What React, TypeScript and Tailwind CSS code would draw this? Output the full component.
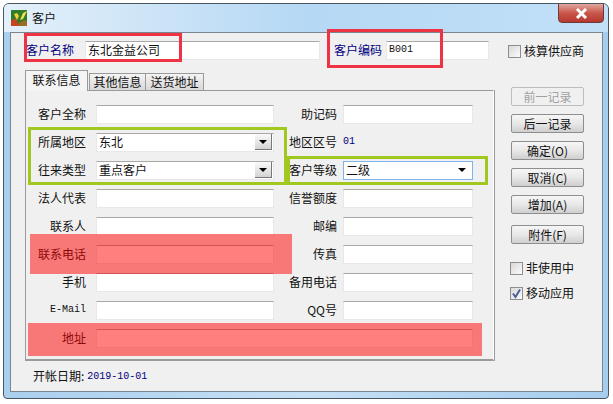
import React from 'react';

const CJK = "font-['Noto_Sans_CJK_SC','Liberation_Sans',sans-serif]";

// left and right columns of the contact tab
const ROWS: [string, string][] = [
  ['客户全称', '助记码'],
  ['所属地区', '地区区号'],
  ['往来类型', '客户等级'],
  ['法人代表', '信誉额度'],
  ['联系人', '邮编'],
  ['联系电话', '传真'],
  ['手机', '备用电话'],
  ['E-Mail', 'QQ号'],
];

function Input({ value, className = '' }: { value?: string; className?: string }) {
  return (
    <div className={`h-[19px] bg-white border-t border-t-[#a8a8a8] border-x border-x-[#e8e8e8] border-b border-b-[#e8e8e8] pl-[2px] text-[12px] leading-[15px] text-[#111] ${className}`}>
      {value}
    </div>
  );
}

function Combo({ value }: { value: string }) {
  return (
    <div className="flex h-[19px] w-[178px] items-start justify-between border-t border-t-[#a8a8a8] border-x border-x-[#e8e8e8] border-b border-b-[#e8e8e8] bg-white pl-[2px] pr-[1px] text-[12px] leading-[15px] text-[#111]">
      <span>{value}</span>
      <span className="flex h-[16px] w-[17px] items-center justify-center border-r border-b border-r-[#777] border-b-[#777] bg-gradient-to-b from-[#fafafa] to-[#d4d4d4]">
        <span className="h-0 w-0 border-x-[4px] border-t-[4px] border-x-transparent border-t-black" />
      </span>
    </div>
  );
}

function Label({ text, width, className = '' }: { text: string; width: string; className?: string }) {
  return <span className={`${width} shrink-0 text-right text-[12px] leading-[17px] text-[#111] ${className}`}>{text}</span>;
}

function Btn({ text, disabled, className = '' }: { text: string; disabled?: boolean; className?: string }) {
  return (
    <button
      className={`flex h-[19px] w-[73px] items-center justify-center rounded-[2px] border bg-gradient-to-b text-[12px] leading-none ${disabled ? 'border-[#bdbdbd] from-[#f0f0f0] to-[#f0f0f0] text-[#a0a0a0]' : 'border-[#8e8e8e] from-[#f6f6f6] via-[#e8e8e8] to-[#cfcfcf] text-[#111]'} ${className}`}
    >
      {text}
    </button>
  );
}

function Check({ text, checked, className = '' }: { text: string; checked?: boolean; className?: string }) {
  return (
    <div className={`flex items-center gap-[3px] text-[12px] text-[#111] ${className}`}>
      <span className="flex h-[13px] w-[13px] items-center justify-center border border-[#8e8e8e] bg-gradient-to-br from-[#d8d8d8] to-[#fbfbfb]">
        {checked && (
          <svg width="11" height="11" viewBox="0 0 11 11">
            <path d="M2 5.5 L4.5 9 L9 1.5" fill="none" stroke="#4a5f97" strokeWidth="2" />
          </svg>
        )}
      </span>
      {text}
    </div>
  );
}

export default function App() {
  return (
    <div className={`relative h-[404px] w-[613px] overflow-hidden bg-white ${CJK}`}>
      {/* window frame */}
      <div className="ml-[3px] mt-[3px] flex h-[396px] w-[606px] flex-col overflow-hidden rounded-t-[6px] rounded-b-[4px] border border-[#4a5560] bg-gradient-to-r from-[#a9cfee] via-[#c5e0f6] to-[#a5cdee] pb-[6px] pl-[6px] pr-[5px]">
        {/* title bar */}
        <div className="relative -mx-[6px] flex h-[28px] shrink-0 items-center gap-[5px] bg-gradient-to-r from-[#e4f0fa] via-[#b5d8f4] to-[#c2e0f8] pl-[7px] text-[12px] text-[#111]">
          <svg width="16" height="16" viewBox="0 0 16 16" className="mb-[1px]">
            <rect width="16" height="16" fill="#2f7d2a" />
            <path d="M0 11 L5 8 L8 16 L0 16 Z" fill="#c9461c" />
            <path d="M3 4 L6 10 L8 6 L6 3 Z" fill="#f2d235" />
            <path d="M9 10 L12 3 L16 1 L12 9 Z" fill="#f4e04d" />
            <path d="M8 13 L13 10 L16 11 L16 16 L8 16 Z" fill="#9c6b24" />
          </svg>
          <span>客户</span>
          {/* close button */}
          <div className="absolute right-[5px] top-[-1px] flex h-[20px] w-[46px] items-center justify-center rounded-b-[4px] border border-[#6d3a38] bg-gradient-to-b from-[#e0a8a0] via-[#c9564c] to-[#b5382f]">
            <svg width="13" height="11" viewBox="0 0 13 11">
              <path d="M2 1 L11 10 M11 1 L2 10" stroke="#fff" strokeWidth="3" />
            </svg>
          </div>
        </div>

        {/* client area */}
        <div className="flex min-h-0 flex-1 flex-col border border-[#7b8590] bg-[#f0f0f0] pl-[14px]">
          {/* header row */}
          <div className="mt-[8px] flex h-[19px] shrink-0 items-start">
            <span className="ml-[1px] w-[59px] text-[12px] leading-[17px] text-[#000080]">客户名称</span>
            <Input value="东北金益公司" className="w-[235px]" />
            <span className="ml-[14px] w-[52px] text-[12px] leading-[17px] text-[#000080]">客户编码</span>
            <Input value="B001" className="w-[103px] font-['Liberation_Mono',monospace] !text-[10px]" />
            <Check text="核算供应商" className="ml-[19px] mt-[1px]" />
          </div>

          <div className="mt-[10px] flex">
            {/* tabs and panel */}
            <div className="w-[469px] shrink-0">
              <div className="flex h-[20px] items-end text-[12px] leading-[14px] text-[#111]">
                <div className="relative z-10 mb-[-1px] flex h-[21px] w-[63px] items-center justify-center border border-b-0 border-[#9a9a9a] bg-[#f4f4f4] pb-[2px]">联系信息</div>
                <div className="ml-[1px] flex h-[17px] w-[57px] items-center justify-center border border-b-0 border-[#9a9a9a] bg-gradient-to-b from-[#f4f4f4] to-[#d8d8d8]">其他信息</div>
                <div className="flex h-[17px] w-[58px] items-center justify-center border border-b-0 border-l-0 border-[#9a9a9a] bg-gradient-to-b from-[#f4f4f4] to-[#d8d8d8]">送货地址</div>
              </div>
              <div className="flex h-[271px] flex-col gap-[9px] border-x border-x-[#fff] border-l-[#9a9a9a] border-t border-t-[#9a9a9a] border-b-2 border-b-[#9a9a9a] pr-[19px] pt-[14px] shadow-[1px_0_0_#9a9a9a]">
                {ROWS.map(([left, right], i) => (
                  <div key={left} className="flex h-[19px]">
                    <Label text={left} width="w-[60px]" className={left === 'E-Mail' ? "font-['Liberation_Mono',monospace] !text-[10px]" : ''} />
                    <div className="ml-[10px]">
                      {i === 1 ? <Combo value="东北" /> : i === 2 ? <Combo value="重点客户" /> : <Input className="w-[178px]" />}
                    </div>
                    <Label text={right} width="w-[63px]" />
                    <div className="ml-[6px]">
                      {i === 1 ? (
                        <div className="font-['Liberation_Mono',monospace] text-[10px] leading-[17px] text-[#000080]">01</div>
                      ) : i === 2 ? (
                        <div className="flex h-[19px] w-[130px] items-start justify-between border border-[#7eb4ea] bg-white pl-[2px] pr-[6px] text-[12px] leading-[15px] text-[#111]">
                          <span>二级</span>
                          <span className="mt-[6px] h-0 w-0 border-x-[4px] border-t-[4px] border-x-transparent border-t-black" />
                        </div>
                      ) : (
                        <Input className="w-[130px]" />
                      )}
                    </div>
                  </div>
                ))}
                <div className="flex h-[19px]">
                  <Label text="地址" width="w-[60px]" />
                  <Input className="ml-[10px] w-[377px]" />
                </div>
              </div>
              <div className="mt-[6px] flex items-center pl-[8px] text-[12px] text-[#111]">
                开帐日期:
                <span className="ml-[3px] font-['Liberation_Mono',monospace] text-[10px] text-[#000080]">2019-10-01</span>
              </div>
            </div>

            {/* buttons and checks */}
            <div className="ml-[17px] flex flex-col pt-[17px]">
              <Btn text="前一记录" disabled />
              <Btn text="后一记录" className="mt-[8px]" />
              <Btn text="确定(O)" className="mt-[8px]" />
              <Btn text="取消(C)" className="mt-[8px]" />
              <Btn text="增加(A)" className="mt-[8px]" />
              <Btn text="附件(F)" className="mt-[11px]" />
              <Check text="非使用中" className="-ml-[1px] mt-[15px]" />
              <Check text="移动应用" checked className="-ml-[1px] mt-[7px]" />
            </div>
          </div>
        </div>
      </div>

      {/* annotation boxes drawn on top of the screenshot */}
      <div className="absolute left-[24px] top-[33px] h-[29px] w-[158px] border-[3px] border-[#ee3344]" />
      <div className="absolute left-[327px] top-[29px] h-[39px] w-[116px] border-[3px] border-[#ee3344]" />
      <div className="absolute left-[28px] top-[127px] h-[58px] w-[259px] border-[3px] border-[#a0c81e]" />
      <div className="absolute left-[287px] top-[156px] h-[29px] w-[201px] border-[3px] border-[#a0c81e]" />
      <div className="absolute left-[30px] top-[234px] h-[40px] w-[262px] bg-[#ff0000]/50" />
      <div className="absolute left-[28px] top-[323px] h-[33px] w-[454px] bg-[#ff0000]/50" />
    </div>
  );
}
